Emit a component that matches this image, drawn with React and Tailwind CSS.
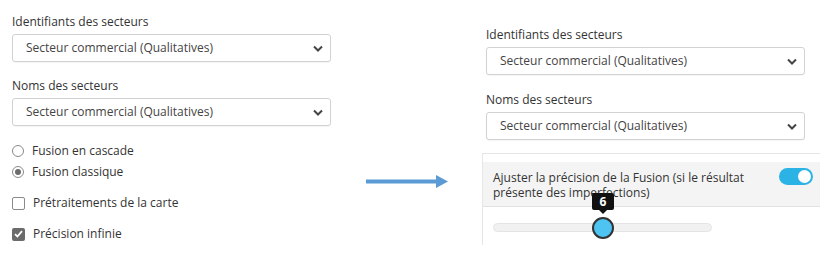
import { useState } from "react";

const font = { fontFamily: '"Open Sans", "Noto Sans", sans-serif' };

const Chevron = () => (
  <svg width="10" height="7" viewBox="0 0 10 7" className="shrink-0">
    <path d="M1 1.5 L5 5.5 L9 1.5" fill="none" stroke="#444" strokeWidth="2" />
  </svg>
);

const Select = ({ value }) => (
  <div className="flex items-center justify-between h-[28px] w-[319px] border border-[#d2d2d2] rounded-[3px] bg-white pl-[13px] pr-[7px] text-[12px] text-[#444] shadow-[0_1px_1px_rgba(0,0,0,0.04)]">
    <span>{value}</span>
    <Chevron />
  </div>
);

const Field = ({ label, className = "" }) => (
  <div className={className}>
    <div className="text-[12px] leading-[16px] text-[#333] mb-[4px]">{label}</div>
    <Select value="Secteur commercial (Qualitatives)" />
  </div>
);

const Radio = ({ checked, label }) => (
  <label className="flex items-center gap-[8px] h-[20px] text-[12px] text-[#333]">
    <span className="w-[12px] h-[12px] shrink-0 rounded-full border border-[#8a8a8a] flex items-center justify-center bg-white">
      {checked && <span className="w-[6px] h-[6px] rounded-full bg-[#6b6b6b]" />}
    </span>
    {label}
  </label>
);

const Checkbox = ({ checked, label }) => (
  <label className="flex items-center gap-[8px] h-[20px] text-[12px] text-[#333]">
    <span
      className={`w-[13px] h-[13px] shrink-0 rounded-[2px] flex items-center justify-center ${
        checked ? "bg-[#6b6b6b]" : "border border-[#8a8a8a] bg-white"
      }`}
    >
      {checked && (
        <svg width="9" height="8" viewBox="0 0 9 8">
          <path d="M1 4.2 L3.4 6.5 L8 1.2" fill="none" stroke="#fff" strokeWidth="1.8" />
        </svg>
      )}
    </span>
    {label}
  </label>
);

export default function App() {
  const [on, setOn] = useState(true);

  return (
    <div className="w-[837px] h-[274px] bg-white flex" style={font}>
      {/* before */}
      <div className="w-[331px] pl-[12px] pt-[14px] shrink-0">
        <Field label="Identifiants des secteurs" />
        <Field label="Noms des secteurs" className="mt-[16px]" />
        <div className="mt-[15px] flex flex-col gap-[1px] pl-[0px]">
          <Radio label="Fusion en cascade" />
          <Radio checked label="Fusion classique" />
        </div>
        <div className="mt-[11px] flex flex-col gap-[11px]">
          <Checkbox label="Prétraitements de la carte" />
          <Checkbox checked label="Précision infinie" />
        </div>
      </div>

      {/* arrow */}
      <div className="w-[151px] shrink-0 pt-[175px] pl-[35px]">
        <svg width="82" height="13" viewBox="0 0 82 13">
          <rect x="0" y="4.5" width="72" height="4" fill="#5b9bd5" />
          <path d="M70 0 L82 6.5 L70 13 Z" fill="#5b9bd5" />
        </svg>
      </div>

      {/* after */}
      <div className="w-[338px] shrink-0 pt-[27px]">
        <Field label="Identifiants des secteurs" className="pl-[4px]" />
        <Field label="Noms des secteurs" className="pl-[4px] mt-[17px]" />
        <div className="mt-[13px] border-l border-t border-[#e6e6e6] h-[92px]">
          <div className="mt-[8px] bg-[#f4f4f4] border-b border-[#e2e2e2] flex items-start justify-between pl-[10px] pr-[7px] pt-[8px] pb-[6px]">
            <div className="text-[12px] leading-[15px] text-[#333]">
              Ajuster la précision de la Fusion (si le résultat
              <br />
              présente des imperfections)
            </div>
            <button
              onClick={() => setOn(!on)}
              className={`mt-[-2px] w-[34px] h-[17px] rounded-full flex items-center px-[2px] ${
                on ? "bg-[#2cb3e6] justify-end" : "bg-[#ccc] justify-start"
              }`}
            >
              <span className="w-[13px] h-[13px] rounded-full bg-white" />
            </button>
          </div>
          <div className="pl-[10px] pt-[16px]">
            <div className="relative w-[219px] h-[9px] rounded-full bg-[#f1f1f1] border border-[#e4e4e4]">
              <div className="absolute left-[98px] top-[-7px] w-[22px] h-[22px] rounded-full bg-[#4dc4f2] border-2 border-[#333]" />
              <div className="absolute left-[98px] top-[-31px] w-[22px] h-[17px] bg-[#111] rounded-[2px] flex items-center justify-center text-white text-[12px] font-bold">
                6
                <span className="absolute bottom-[-4px] left-[7px] w-0 h-0 border-l-[4px] border-r-[4px] border-t-[4px] border-l-transparent border-r-transparent border-t-[#111]" />
              </div>
            </div>
          </div>
        </div>
      </div>
    </div>
  );
}
